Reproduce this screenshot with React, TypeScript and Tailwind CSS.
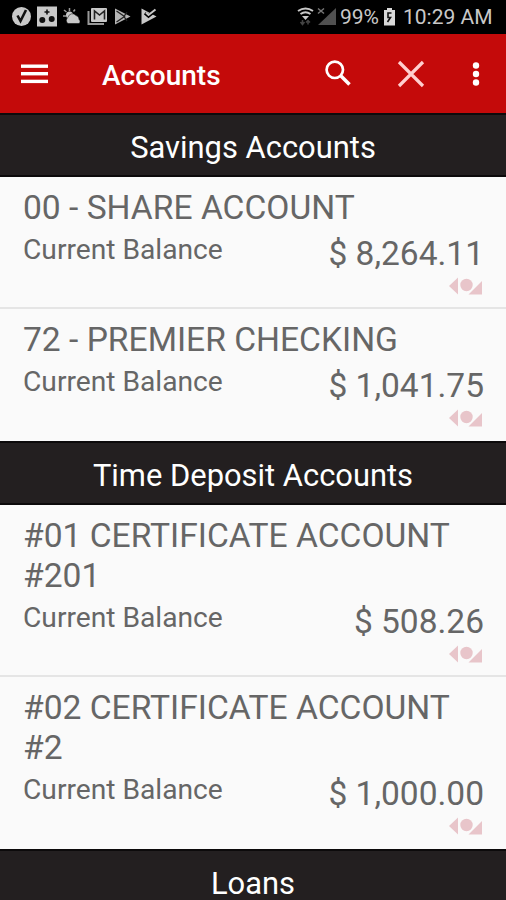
type Account = {
  name: string;
  balance: string;
};

type Section = {
  title: string;
  accounts: Account[];
};

const sections: Section[] = [
  {
    title: "Savings Accounts",
    accounts: [
      { name: "00 - SHARE ACCOUNT", balance: "$ 8,264.11" },
      { name: "72 - PREMIER CHECKING", balance: "$ 1,041.75" },
    ],
  },
  {
    title: "Time Deposit Accounts",
    accounts: [
      { name: "#01 CERTIFICATE ACCOUNT #201", balance: "$ 508.26" },
      { name: "#02 CERTIFICATE ACCOUNT #2", balance: "$ 1,000.00" },
    ],
  },
  { title: "Loans", accounts: [] },
];

const StatusBar = () => (
  <div className="flex h-[34px] shrink-0 items-center justify-between bg-black pr-[14px] pl-3 text-[#c9c9c9]">
    <svg width="146" height="34" viewBox="0 0 146 34" fill="#c9c9c9">
      {/* check badge */}
      <circle cx="9.5" cy="16.5" r="9.5" />
      <path d="M5.5 15.5l3 5.5 5.5-11" fill="none" stroke="#111" strokeWidth="2.6" />
      {/* dots tile */}
      <rect x="25" y="6.5" width="20" height="20" />
      <g fill="#111">
        <path d="M34.2 9.5h1.6v1.7h1.7v1.6h-1.7v1.7h-1.6v-1.7h-1.7v-1.6h1.7z" />
        <circle cx="30.3" cy="20" r="3" />
        <circle cx="39.7" cy="19" r="3" />
      </g>
      {/* weather */}
      <circle cx="57.5" cy="15" r="3.5" />
      <path d="M57.5 8v3M52 10l2.5 2M51 16h3M63 9.5l-1.5 2" stroke="#999" strokeWidth="1.5" />
      <path d="M56 23.5a3.5 3.5 0 0 1 0-6 4.5 4.5 0 0 1 8-2 4 4 0 0 1 3 4 2.5 2.5 0 0 1 0 4z" stroke="#000" strokeWidth=".5" />
      {/* gallery mail */}
      <path d="M76.5 11v13H92" fill="none" stroke="#999" strokeWidth="2" />
      <rect x="79" y="8" width="16" height="14" rx="1" />
      <path d="M82.5 19.5v-8.5l5 4 5-4v8.5" fill="none" stroke="#222" strokeWidth="1.6" />
      {/* play */}
      <path d="M103 8.5l15.5 8-15.5 8z" fill="#b5b5b5" />
      <path d="M104.5 11l8 5.5-8 5.5M115 12l-3 4.5 3 4.5" fill="none" stroke="#222" strokeWidth="1.3" />
      {/* play check */}
      <path d="M129.5 8.5l15 8-15 8z" />
      <path d="M133 13l3.5 3 8-6.500" fill="none" stroke="#000" strokeWidth="3.4" />
      <path d="M134 12.500l2.500 2.500 7-5.500" fill="none" stroke="#c9c9c9" strokeWidth="2" />
    </svg>
    <div className="flex items-center">
      <svg width="40" height="34" viewBox="0 0 40 34" fill="none">
        <path d="M1 11q7.5-5 15 0M3.5 14q5-3.5 10 0" stroke="#c9c9c9" strokeWidth="2" />
        <path d="M5 16h7L8.5 20z" fill="#c9c9c9" />
        <path d="M5.5 24v-4M3.5 22l2 2.5 2-2.5M11 24.5v-4M9 22.5l2-2 2 2" stroke="#444" strokeWidth="1.5" />
        <path d="M39 8v17H21z" fill="#505050" />
        <path d="M21 8.5l6 5M27 8.5l-6 5" stroke="#777" strokeWidth="1.5" />
      </svg>
      <span className="ml-[3px] w-[41px] text-[21px] leading-none">99%</span>
      <svg width="13" height="34" viewBox="0 0 13 34" className="ml-[2px]">
        <path d="M1 10h3V8h5v2h3v15.5H1z" fill="#d9d9d9" />
        <path d="M8.5 13H5v4.5h2.5L4.5 22" fill="none" stroke="#111" strokeWidth="1.6" />
      </svg>
      <span className="ml-[7px] w-[89px] text-[21px] leading-none whitespace-nowrap">10:29 AM</span>
    </div>
  </div>
);

const Toolbar = () => (
  <header className="flex h-[79px] shrink-0 items-center bg-[#c40a0a] pl-[21px] text-white">
    <svg width="27" height="20" viewBox="0 0 27 20" fill="white">
      <rect y="0.5" width="27" height="3.4" />
      <rect y="8" width="27" height="3.4" />
      <rect y="15.7" width="27" height="3.4" />
    </svg>
    <h1 className="ml-[54px] w-[223px] pt-[4px] text-[28px] leading-8 font-medium">Accounts</h1>
    <svg width="26" height="26" viewBox="0 0 26 26" fill="none" stroke="white" className="-mt-[2px]">
      <circle cx="9.8" cy="9.8" r="8.2" strokeWidth="2.7" />
      <path d="M15.5 15.5l9 9" strokeWidth="3.6" />
    </svg>
    <svg width="28" height="28" viewBox="0 0 28 28" fill="none" className="ml-[46px]">
      <path d="M2 2l24 24M26 2L2 26" stroke="#ffcfcf" strokeWidth="3.2" />
    </svg>
    <svg width="8" height="26" viewBox="0 0 8 26" fill="white" className="ml-[47px]">
      <circle cx="4" cy="4.5" r="3.2" />
      <circle cx="4" cy="13" r="3.2" />
      <circle cx="4" cy="21.5" r="3.2" />
    </svg>
  </header>
);

const ShapesMark = () => (
  <svg width="34" height="18" viewBox="0 0 34 18" fill="#e8c5ca">
    <path d="M0 9l9-8.5v17z" />
    <circle cx="17.5" cy="8" r="6.2" />
    <path d="M33 4v13.5H19.5z" />
  </svg>
);

const AccountRow = ({ name, balance }: Account) => (
  <li className="border-b-2 border-[#e5e5e5] px-[23px] pt-[11px] last:border-b-0 last:pb-[2px]">
    <h3 className="text-[33.6px] leading-10">{name}</h3>
    <div className="flex h-[49px] items-start justify-between">
      <span className="pt-[6px] text-[28.2px] leading-8">Current Balance</span>
      <span className="-mr-px pt-[6px] text-[33.5px] leading-[39px]">{balance}</span>
    </div>
    <div className="flex h-[30px] justify-end">
      <ShapesMark />
    </div>
  </li>
);

const App = () => {
  return (
    <div className="flex h-[900px] w-[506px] flex-col overflow-hidden bg-[#fafafa] font-['Roboto',sans-serif] text-[#666]">
      <StatusBar />
      <Toolbar />
      {sections.map((section) => (
        <section key={section.title} className="shrink-0">
          <h2 className="h-16 border-y-2 border-[#0c0a0b] bg-[#231f20] pt-[17px] text-center text-[30.9px] leading-8 text-white">
            {section.title}
          </h2>
          <ul>
            {section.accounts.map((account) => (
              <AccountRow key={account.name} {...account} />
            ))}
          </ul>
        </section>
      ))}
    </div>
  );
};

export default App;
